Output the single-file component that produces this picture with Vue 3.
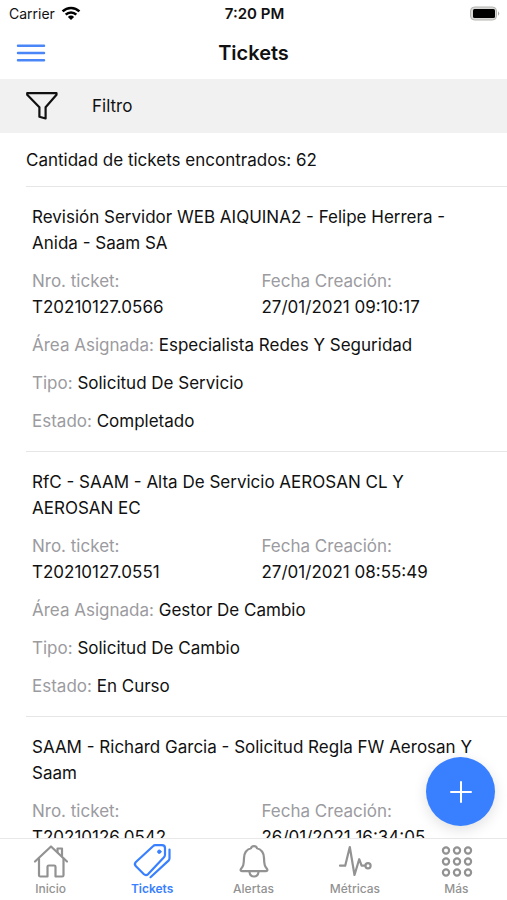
<script setup>
import { ref } from 'vue'

const total = 62
const active = ref('Tickets')
const tabs = ['Inicio', 'Tickets', 'Alertas', 'Métricas', 'Más']

const tickets = [
  {
    id: 'T20210127.0566',
    title: 'Revisión Servidor WEB AIQUINA2 - Felipe Herrera - Anida - Saam SA',
    created: '27/01/2021 09:10:17',
    area: 'Especialista Redes Y Seguridad',
    type: 'Solicitud De Servicio',
    state: 'Completado',
  },
  {
    id: 'T20210127.0551',
    title: 'RfC - SAAM - Alta De Servicio AEROSAN CL Y AEROSAN EC',
    created: '27/01/2021 08:55:49',
    area: 'Gestor De Cambio',
    type: 'Solicitud De Cambio',
    state: 'En Curso',
  },
  {
    id: 'T20210126.0542',
    title: 'SAAM - Richard Garcia - Solicitud Regla FW Aerosan Y Saam',
    created: '26/01/2021 16:34:05',
  },
]
</script>

<template>
  <div class="screen">
    <div class="status">
      <span class="carrier">
        Carrier
        <svg width="20" height="16" viewBox="0 0 20 16" aria-hidden="true">
          <g fill="none" stroke="#000" stroke-width="2.6">
            <path d="M1.6 5.4a12 12 0 0 1 16.8 0" />
            <path d="M4.7 8.6a7.6 7.6 0 0 1 10.6 0" />
          </g>
          <path d="M10 14 6.9 10.9a4.4 4.4 0 0 1 6.2 0Z" />
        </svg>
      </span>
      <span class="time">7:20 PM</span>
      <svg class="battery" width="31" height="16" viewBox="0 0 31 16" aria-hidden="true">
        <rect x="1.5" y="1" width="26" height="13" rx="4" fill="#d8d8d6" stroke="#b4b4b2" />
        <rect x="4" y="3" width="22" height="9" rx="1.5" />
        <path d="M29 5.2q2.4 2.3 0 4.6Z" fill="#a8a8a6" />
      </svg>
    </div>

    <header class="header">
      <button class="menu" type="button" aria-label="Menú">
        <svg width="30" height="20" viewBox="0 0 30 20" fill="none" stroke="#4a86f7" stroke-width="2.5" stroke-linecap="round">
          <path d="M2 2.7h26M2 10h26M2 17.3h26" />
        </svg>
      </button>
      <h1>Tickets</h1>
    </header>

    <button class="filter" type="button">
      <svg width="34" height="30" viewBox="0 0 34 30" fill="none" stroke="#111" stroke-width="2.2" stroke-linejoin="round">
        <path d="M2.2 2.2h29.3v1.6L20.6 16.2v11.3l-6.2-1.8v-9.5L2.2 3.8Z" />
      </svg>
      <span>Filtro</span>
    </button>

    <main class="content">
      <div class="scroll">
        <p class="count">Cantidad de tickets encontrados: {{ total }}</p>
        <article v-for="t in tickets" :key="t.id" class="ticket">
          <h2>{{ t.title }}</h2>
          <dl class="pair">
            <div>
              <dt>Nro. ticket:</dt>
              <dd>{{ t.id }}</dd>
            </div>
            <div>
              <dt>Fecha Creación:</dt>
              <dd>{{ t.created }}</dd>
            </div>
          </dl>
          <p v-if="t.area"><span class="label">Área Asignada:</span> {{ t.area }}</p>
          <p v-if="t.type"><span class="label">Tipo:</span> {{ t.type }}</p>
          <p v-if="t.state"><span class="label">Estado:</span> {{ t.state }}</p>
        </article>
      </div>
      <button class="fab" type="button" aria-label="Nuevo ticket">
        <svg width="24" height="24" viewBox="0 0 24 24" fill="none" stroke="#fff" stroke-width="2" stroke-linecap="round">
          <path d="M12 2v20M2 12h20" />
        </svg>
      </button>
    </main>

    <nav class="tabs">
      <a
        v-for="tab in tabs"
        :key="tab"
        href="#"
        class="tab"
        :class="{ active: tab === active }"
        @click.prevent="active = tab"
      >
        <svg width="40" height="38" viewBox="0 0 40 38" fill="none" stroke="currentColor" stroke-width="2.2" stroke-linecap="round" stroke-linejoin="round" aria-hidden="true">
          <g v-if="tab === 'Inicio'">
            <path d="M4 18.5 20 3.5l16 15" />
            <path d="M26.500 9.300V5.500h4.500v8" />
            <path d="M8 15.500v16.700q0 1.300 1.300 1.300h7.200v-9.700q0-1.300 1.300-1.300h5.400q1.300 0 1.300 1.300v9.700h6.700q1.300 0 1.300-1.300V15.500" />
          </g>
          <g v-else-if="tab === 'Tickets'">
            <path d="M21 3.200q1-1 2.400-1H30q3 0 3 3v6.600q0 1.400-1 2.400L16.200 31.100q-2.300 2-4.500-.1l-7.800-7.800q-2.100-2.100 0-4.200Z" />
            <circle cx="27.300" cy="8.700" r="1.700" fill="currentColor" stroke-width="1" />
            <path d="M37.500 6.500v8.700q0 1.400-1 2.400L18.500 34.200" />
          </g>
          <g v-else-if="tab === 'Alertas'">
            <path d="M20 3.100q-2.500 0-3 2.100-6.700 1.700-7 9.800c-.2 7-.8 8.100-2.800 10.700q-1.500 2.200.8 2.400h24q2.300-.2.8-2.400c-2-2.600-2.600-3.700-2.800-10.700q-.3-8.100-7-9.800-.5-2.100-3-2.100Z" />
            <path d="M15.500 29.200q.6 4.300 4.500 4.300t4.500-4.300" />
          </g>
          <g v-else-if="tab === 'Métricas'">
            <path d="M5 22.700h5.200L14.800 4l4.700 28 4.700-15.800 2.400 6.500h3.700" />
            <circle cx="33" cy="22.700" r="2.600" />
          </g>
          <g v-else>
            <template v-for="cy in [7.5, 18.5, 29.5]" :key="cy">
              <circle v-for="cx in [10, 21, 32]" :key="cx" :cx="cx" :cy="cy" r="3.1" />
            </template>
          </g>
        </svg>
        <span>{{ tab }}</span>
      </a>
    </nav>
  </div>
</template>

<style>
body {
  margin: 0;
  background: #fff;
}
</style>

<style scoped>
.screen {
  display: flex;
  flex-direction: column;
  height: 100vh;
  font-family: Inter, "Liberation Sans", sans-serif;
  font-size: 17px;
  line-height: 26px;
  color: #111;
  background: #fff;
}
button {
  padding: 0;
  border: 0;
  font: inherit;
  color: inherit;
  background: none;
  cursor: pointer;
}
h1,
h2,
p,
dl,
dd {
  margin: 0;
}
svg {
  display: block;
  flex: none;
}
.status {
  display: grid;
  grid-template-columns: 1fr auto 1fr;
  align-items: center;
  height: 27px;
  padding: 0 7px 0 9px;
  font-size: 14px;
}
.carrier {
  display: flex;
  align-items: center;
  gap: 6px;
}
.time {
  font-size: 15px;
  font-weight: 600;
}
.battery {
  justify-self: end;
}
.header {
  display: grid;
  grid-template-columns: 1fr auto 1fr;
  align-items: center;
  height: 52px;
  padding: 0 16px;
}
.menu {
  justify-self: start;
}
h1 {
  font-size: 20px;
  font-weight: 600;
}
.filter {
  display: flex;
  align-items: center;
  gap: 33px;
  height: 54px;
  padding: 0 25px;
  background: #f1f1f1;
}
.content {
  position: relative;
  flex: 1;
  min-height: 0;
}
.scroll {
  height: 100%;
  padding-left: 26px;
  box-sizing: border-box;
  overflow-y: auto;
  scrollbar-width: none;
}
.count {
  padding: 14px 0 13px;
  border-bottom: 1px solid #e6e6e6;
}
.ticket {
  display: flex;
  flex-direction: column;
  gap: 12px;
  padding: 17px 32px 17px 6px;
  border-bottom: 1px solid #e6e6e6;
}
h2 {
  font-size: 17px;
  font-weight: 400;
}
.pair {
  display: grid;
  grid-template-columns: 1fr 1fr;
  margin-right: -16px;
}
dt,
.label {
  color: #9b9ba0;
}
.fab {
  position: absolute;
  right: 12px;
  bottom: 12px;
  display: grid;
  place-items: center;
  width: 69px;
  height: 69px;
  border-radius: 50%;
  background: #3880ff;
  box-shadow: 0 4px 14px rgba(0, 0, 0, 0.12);
}
.tabs {
  display: flex;
  height: 61px;
  border-top: 1px solid #e8e8e8;
  background: #fff;
}
.tab {
  flex: 1;
  display: flex;
  flex-direction: column;
  align-items: center;
  padding-top: 4px;
  font-size: 12px;
  font-weight: 500;
  line-height: 16px;
  color: #929292;
  text-decoration: none;
}
.tab.active {
  color: #3880ff;
  font-weight: 600;
}
</style>
